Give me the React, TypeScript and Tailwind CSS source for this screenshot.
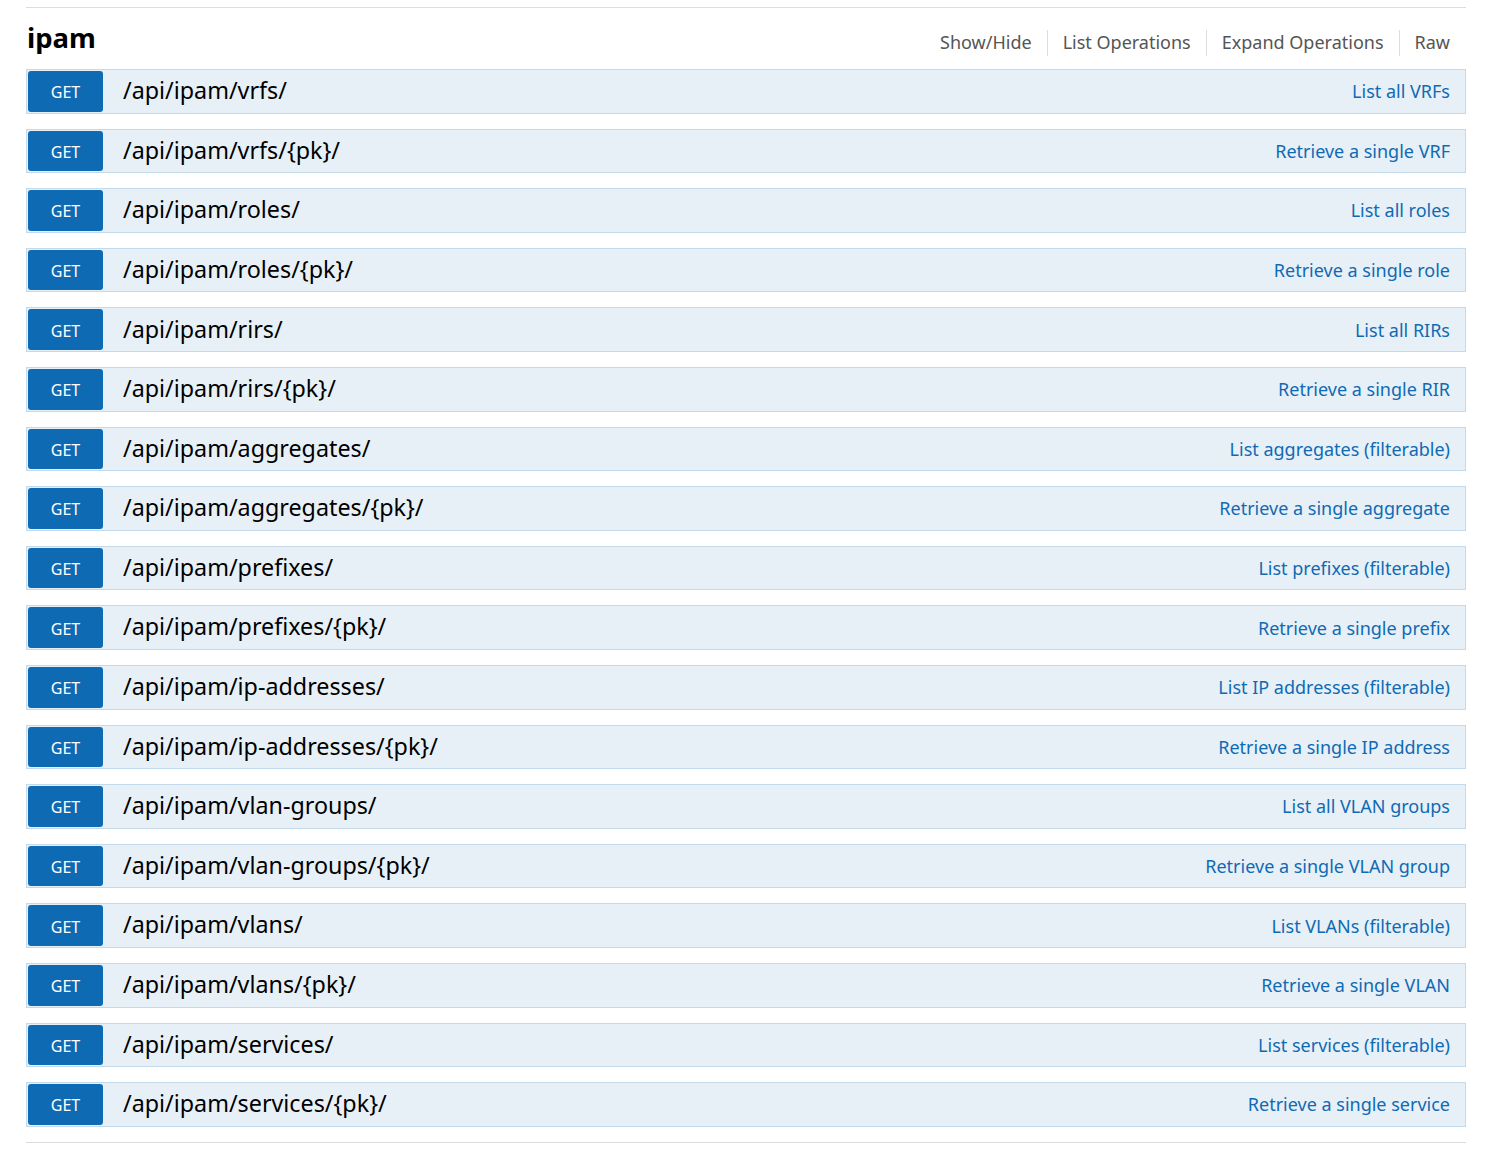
const endpoints: [string, string][] = [
  ["/api/ipam/vrfs/", "List all VRFs"],
  ["/api/ipam/vrfs/{pk}/", "Retrieve a single VRF"],
  ["/api/ipam/roles/", "List all roles"],
  ["/api/ipam/roles/{pk}/", "Retrieve a single role"],
  ["/api/ipam/rirs/", "List all RIRs"],
  ["/api/ipam/rirs/{pk}/", "Retrieve a single RIR"],
  ["/api/ipam/aggregates/", "List aggregates (filterable)"],
  ["/api/ipam/aggregates/{pk}/", "Retrieve a single aggregate"],
  ["/api/ipam/prefixes/", "List prefixes (filterable)"],
  ["/api/ipam/prefixes/{pk}/", "Retrieve a single prefix"],
  ["/api/ipam/ip-addresses/", "List IP addresses (filterable)"],
  ["/api/ipam/ip-addresses/{pk}/", "Retrieve a single IP address"],
  ["/api/ipam/vlan-groups/", "List all VLAN groups"],
  ["/api/ipam/vlan-groups/{pk}/", "Retrieve a single VLAN group"],
  ["/api/ipam/vlans/", "List VLANs (filterable)"],
  ["/api/ipam/vlans/{pk}/", "Retrieve a single VLAN"],
  ["/api/ipam/services/", "List services (filterable)"],
  ["/api/ipam/services/{pk}/", "Retrieve a single service"],
];

const navItems = ["Show/Hide", "List Operations", "Expand Operations", "Raw"];

const OperationRow = ({path, summary}: {path: string; summary: string}) => {
  return (
    <div className="flex items-center h-[44.6px] mb-[15px] bg-[#e7f0f7] border border-[#c3d9ec]">
      <div className="h-full py-px pl-px">
        <div className="h-full w-[75px] rounded-[3px] bg-[#0f6ab4] text-white text-[16px] flex items-center justify-center pt-[2px]">
          GET
        </div>
      </div>
      <div className="ml-[20px] text-[23.3px] text-black flex-grow leading-none pb-[1px]">{path}</div>
      <div className="mr-[15px] text-[18px] text-[#0f6ab4] leading-none">{summary}</div>
    </div>
  );
};

export default function App() {
  return (
    <div className="bg-white min-h-[1156px] pt-[7px] font-['Noto_Sans',sans-serif]">
      <div className="ml-[26px] w-[1440px] border-t border-[#dddddd]">
        <div className="h-[61px] flex items-center justify-between">
          <h2 className="text-[27.5px] font-bold text-black leading-none pb-[2px] ml-px">ipam</h2>
          <div className="flex items-center mr-[16px] mt-[8px]">
            {navItems.map((item, i) => (
              <div key={item} className="flex items-center">
                {i > 0 && <div className="w-px h-[26px] bg-[#dddddd] mx-[15px]"/>}
                <span className="text-[18px] text-[#555555]">{item}</span>
              </div>
            ))}
          </div>
        </div>
        {endpoints.map(([path, summary]) => (
          <OperationRow key={path} path={path} summary={summary}/>
        ))}
        <div className="border-t border-[#dddddd]"/>
      </div>
    </div>
  );
}
